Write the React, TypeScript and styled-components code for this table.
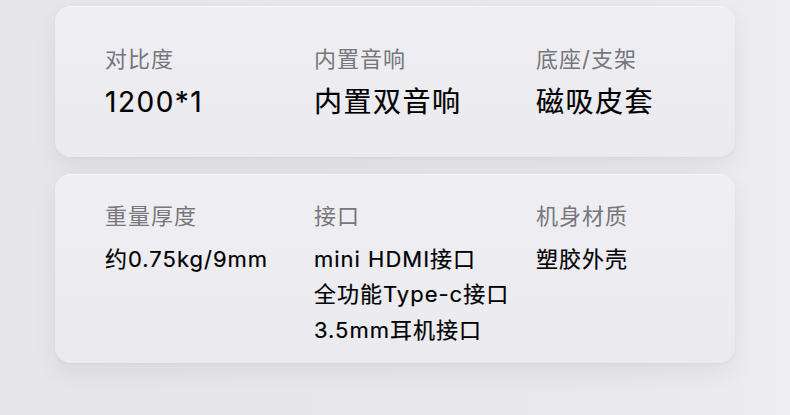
import React from "react";
import styled, { createGlobalStyle } from "styled-components";

type spec = {
  label: string;
  value: string[];
};

const topSpecs: spec[] = [
  { label: "对比度", value: ["1200*1"] },
  { label: "内置音响", value: ["内置双音响"] },
  { label: "底座/支架", value: ["磁吸皮套"] },
];

const bottomSpecs: spec[] = [
  { label: "重量厚度", value: ["约0.75kg/9mm"] },
  { label: "接口", value: ["mini HDMI接口", "全功能Type-c接口", "3.5mm耳机接口"] },
  { label: "机身材质", value: ["塑胶外壳"] },
];

const App = () => {
  return (
    <>
      <GlobalStyle />
      <Page>
        <SpecCard $padTop={37} $padBottom={36}>
          {topSpecs.map((item) => (
            <SpecCell key={item.label}>
              <Label>{item.label}</Label>
              {item.value.map((line) => (
                <Value key={line} $big>
                  {line}
                </Value>
              ))}
            </SpecCell>
          ))}
        </SpecCard>
        <SpecCard $padTop={26} $padBottom={15}>
          {bottomSpecs.map((item) => (
            <SpecCell key={item.label}>
              <Label>{item.label}</Label>
              {item.value.map((line) => (
                <Value key={line}>{line}</Value>
              ))}
            </SpecCell>
          ))}
        </SpecCard>
      </Page>
    </>
  );
};

export default App;

const GlobalStyle = createGlobalStyle`
  html, body {
    margin: 0;
    padding: 0;
    background: linear-gradient(90deg, #e6e6ea 0%, #e9e9ed 80%, #eeeef1 100%);
    font-family: Inter, "Noto Sans CJK SC", sans-serif;
  }
`;

const Page = styled.div`
  width: 790px;
  height: 415px;
  box-sizing: border-box;
  padding: 6px 0 0 55px;
  display: flex;
  flex-direction: column;
  gap: 17px;
  overflow: hidden;
`;

const SpecCard = styled.div<{ $padTop: number; $padBottom: number }>`
  width: 680px;
  box-sizing: border-box;
  padding: ${(p) => p.$padTop}px 0 ${(p) => p.$padBottom}px 50px;
  display: grid;
  grid-template-columns: 209px 222px 1fr;
  background: linear-gradient(180deg, #efeff3 0%, #ebebef 100%);
  border-radius: 16px;
  border-top: 1px solid #f6f6f9;
  box-shadow: 0 10px 22px rgba(60, 60, 80, 0.08), 0 1px 3px rgba(60, 60, 80, 0.05);
`;

const SpecCell = styled.div`
  display: flex;
  flex-direction: column;
`;

const Label = styled.div`
  font-size: 22px;
  line-height: 30px;
  letter-spacing: 1px;
  color: #76767b;
  margin-bottom: 11px;
`;

const Value = styled.div<{ $big?: boolean }>`
  font-size: ${(p) => (p.$big ? "28px" : "22px")};
  line-height: 35.5px;
  letter-spacing: ${(p) => (p.$big ? "1.5px" : "1px")};
  color: #000;
  white-space: nowrap;
  -webkit-text-stroke: 0.2px #000;
`;
